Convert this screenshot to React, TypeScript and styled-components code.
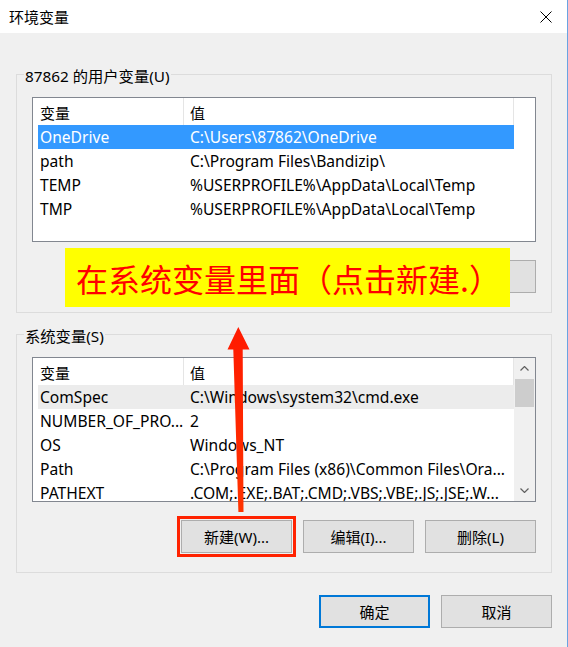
import React from "react";
import styled, { createGlobalStyle } from "styled-components";

const GlobalStyle = createGlobalStyle`
  html, body { margin: 0; padding: 0; background: #f0f0f0; }
  *, *::before, *::after { box-sizing: border-box; }
`;

const Window = styled.div`
  position: relative;
  width: 568px;
  height: 647px;
  display: flex;
  flex-direction: column;
  background: #f0f0f0;
  border-right: 1px solid #6aa4e2;
  font-family: "Noto Sans", "Noto Sans CJK SC", sans-serif;
  font-size: 15px;
  color: #000;
  overflow: hidden;
`;

const TitleBar = styled.header`
  flex: none;
  height: 33px;
  background: #fff;
  display: flex;
  align-items: center;
  justify-content: space-between;
  padding: 0 15px 0 9px;
`;

const Title = styled.span`
  font-size: 15px;
  line-height: 20px;
`;

const CloseIcon = styled.svg`
  display: block;
  width: 12px;
  height: 12px;
`;

const Body = styled.main`
  flex: 1;
  display: flex;
  flex-direction: column;
  padding: 41px 15px 0 16px;
`;

const GroupBox = styled.section`
  display: flex;
  flex-direction: column;
  border: 1px solid #dcdcdc;
  padding: 0 15px 19px;
  & + & {
    margin-top: 21px;
  }
`;

const GroupLabel = styled.div`
  align-self: flex-start;
  margin: -9px 0 0 -8px;
  padding: 0 1px;
  line-height: 20px;
  font-size: 15.3px;
  background: #f0f0f0;
`;

const ListBox = styled.div`
  margin-top: 11px;
  height: 145px;
  display: flex;
  border: 1px solid #828790;
  background: #fff;
  padding-left: 5px;
`;

const Table = styled.div`
  width: 476px;
  display: flex;
  flex-direction: column;
  overflow: hidden;
`;

const HeaderRow = styled.div`
  flex: none;
  height: 27px;
  display: flex;
`;

const HeaderCell = styled.div<{ $w: number; $pad: number }>`
  width: ${(p) => p.$w}px;
  padding: 2px 0 0 ${(p) => p.$pad}px;
  border-right: 1px solid #e5e5e5;
  display: flex;
  align-items: center;
  line-height: 20px;
`;

const Rows = styled.div`
  flex: 1;
  overflow: hidden;
`;

const Row = styled.div<{ $state?: "selected" | "hover" }>`
  height: 24px;
  display: flex;
  align-items: center;
  background: ${(p) =>
    p.$state === "selected" ? "#3399ff" : p.$state === "hover" ? "#ececec" : "transparent"};
  color: ${(p) => (p.$state === "selected" ? "#fff" : "#000")};
`;

const Cell = styled.div<{ $w: number; $pad: number }>`
  width: ${(p) => p.$w}px;
  padding-left: ${(p) => p.$pad}px;
  white-space: nowrap;
  overflow: hidden;
  font-size: 15.6px;
  line-height: 24px;
`;

const ScrollSpace = styled.div`
  width: 21px;
  flex: none;
`;

const ScrollBar = styled.div`
  width: 21px;
  flex: none;
  display: flex;
  flex-direction: column;
  background: #f0f0f0;
`;

const ScrollArrow = styled.div`
  height: 21px;
  flex: none;
  display: flex;
  align-items: center;
  justify-content: center;
`;

const ScrollThumb = styled.div`
  height: 28px;
  margin: 0 1px;
  background: #cdcdcd;
`;

const ScrollTrack = styled.div`
  flex: 1;
`;

const ButtonRow = styled.div<{ $top: number }>`
  margin-top: ${(p) => p.$top}px;
  display: flex;
  justify-content: flex-end;
  gap: 11px;
`;

const Button = styled.button<{ $primary?: boolean; $marked?: boolean }>`
  width: 111px;
  height: 33px;
  padding: 0;
  font: inherit;
  font-size: 15px;
  color: #000;
  background: #e1e1e1;
  border: ${(p) => (p.$primary ? "2px solid #0078d7" : "1px solid #adadad")};
  box-shadow: ${(p) => (p.$marked ? "0 0 0 1px #f0f0f0, 0 0 0 4px #ff2200" : "none")};
`;

const Callout = styled.div`
  position: absolute;
  left: 65px;
  top: 248px;
  width: 445px;
  height: 59px;
  background: #ffff00;
  color: #ff0000;
  font-family: "Noto Sans CJK SC", sans-serif;
  font-size: 32px;
  display: flex;
  align-items: center;
  padding-left: 11px;
  white-space: nowrap;
`;

const ArrowSvg = styled.svg`
  position: absolute;
  left: 226px;
  top: 326px;
  width: 26px;
  height: 188px;
`;

type Item = { name: string; value: string; state?: "selected" | "hover" };

const userVars: Item[] = [
  { name: "OneDrive", value: "C:\\Users\\87862\\OneDrive", state: "selected" },
  { name: "path", value: "C:\\Program Files\\Bandizip\\" },
  { name: "TEMP", value: "%USERPROFILE%\\AppData\\Local\\Temp" },
  { name: "TMP", value: "%USERPROFILE%\\AppData\\Local\\Temp" },
];

const systemVars: Item[] = [
  { name: "ComSpec", value: "C:\\Windows\\system32\\cmd.exe", state: "hover" },
  { name: "NUMBER_OF_PRO...", value: "2" },
  { name: "OS", value: "Windows_NT" },
  { name: "Path", value: "C:\\Program Files (x86)\\Common Files\\Ora..." },
  { name: "PATHEXT", value: ".COM;.EXE;.BAT;.CMD;.VBS;.VBE;.JS;.JSE;.W..." },
];

const Chevron = ({ down }: { down?: boolean }) => (
  <svg width="9" height="5" viewBox="0 0 9 5">
    <path
      d={down ? "M0.5 0.5 L4.5 4.5 L8.5 0.5" : "M0.5 4.5 L4.5 0.5 L8.5 4.5"}
      fill="none"
      stroke="#606060"
      strokeWidth="1.2"
    />
  </svg>
);

const VarList = ({ items, scroll }: { items: Item[]; scroll?: boolean }) => (
  <ListBox>
    <Table>
      <HeaderRow>
        <HeaderCell $w={146} $pad={2}>变量</HeaderCell>
        <HeaderCell $w={330} $pad={6}>值</HeaderCell>
      </HeaderRow>
      <Rows>
        {items.map((it, i) => (
          <Row key={i} $state={it.state}>
            <Cell $w={146} $pad={2}>{it.name}</Cell>
            <Cell $w={330} $pad={6}>{it.value}</Cell>
          </Row>
        ))}
      </Rows>
    </Table>
    {scroll ? (
      <ScrollBar>
        <ScrollArrow>
          <Chevron />
        </ScrollArrow>
        <ScrollThumb />
        <ScrollTrack />
        <ScrollArrow>
          <Chevron down />
        </ScrollArrow>
      </ScrollBar>
    ) : (
      <ScrollSpace />
    )}
  </ListBox>
);

export default function App() {
  return (
    <>
      <GlobalStyle />
      <Window>
        <TitleBar>
          <Title>环境变量</Title>
          <CloseIcon viewBox="0 0 12 12">
            <path d="M0.5 0.5 L11.5 11.5 M11.5 0.5 L0.5 11.5" stroke="#000" strokeWidth="1" />
          </CloseIcon>
        </TitleBar>
        <Body>
          <GroupBox>
            <GroupLabel>87862 的用户变量(U)</GroupLabel>
            <VarList items={userVars} />
            <ButtonRow $top={18}>
              <Button>新建(N)...</Button>
              <Button>编辑(E)...</Button>
              <Button>删除(D)</Button>
            </ButtonRow>
          </GroupBox>
          <GroupBox>
            <GroupLabel>系统变量(S)</GroupLabel>
            <VarList items={systemVars} scroll />
            <ButtonRow $top={18}>
              <Button $marked>新建(W)...</Button>
              <Button>编辑(I)...</Button>
              <Button>删除(L)</Button>
            </ButtonRow>
          </GroupBox>
          <ButtonRow $top={22}>
            <Button $primary>确定</Button>
            <Button>取消</Button>
          </ButtonRow>
        </Body>
        <Callout>在系统变量里面（点击新建.）</Callout>
        <ArrowSvg viewBox="226 326 26 188">
          <defs>
            <linearGradient id="arrowFill" x1="0" y1="0" x2="0" y2="1">
              <stop offset="0" stopColor="#ff1a00" />
              <stop offset="1" stopColor="#ff3300" />
            </linearGradient>
          </defs>
          <polygon
            points="238.3,327 249.5,349.5 242.7,349.5 243.5,512 238.4,512 233.3,349.5 227.5,349.5"
            fill="url(#arrowFill)"
          />
        </ArrowSvg>
      </Window>
    </>
  );
}
